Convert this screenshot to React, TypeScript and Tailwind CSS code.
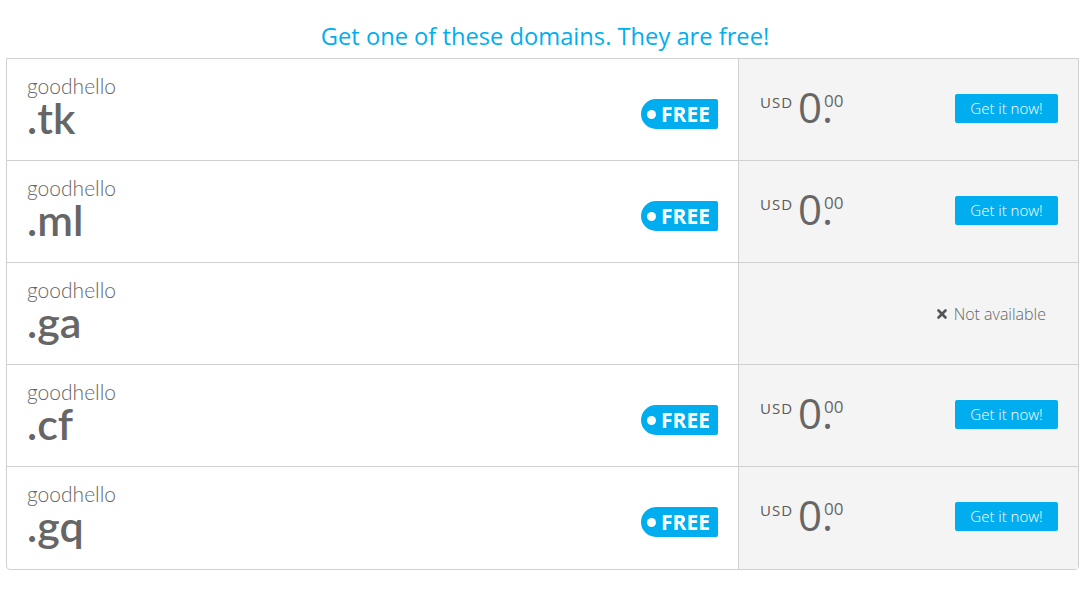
import { X } from 'lucide-react';

const rows = [
  { tld: '.tk', free: true },
  { tld: '.ml', free: true },
  { tld: '.ga', free: false },
  { tld: '.cf', free: true },
  { tld: '.gq', free: true },
];

const Row = ({ tld, free, last }: { tld: string; free: boolean; last: boolean }) => (
  <div className={`flex h-[102px] ${last ? '' : 'border-b border-[#d0d0d0]'}`}>
    {/* domain name */}
    <div className="flex w-[731px] items-start justify-between pl-[20px] pr-[20px]">
      <div className="pt-[13px] font-['Lato',sans-serif] text-[#666]">
        <div className="text-[21px] font-light leading-[28px]">goodhello</div>
        <div className="-mt-[5px] text-[43px] font-semibold leading-[46px]">{tld}</div>
      </div>
      {free && (
        <div className="mt-[40px] flex h-[30px] w-[77px] items-center rounded-l-[15px] rounded-r-[2px] bg-[#00aeef] pl-[6px] font-['Open_Sans',sans-serif] text-white">
          <span className="mr-[5px] h-[9px] w-[9px] rounded-full bg-white" />
          <span className="text-[21px] font-bold leading-none">FREE</span>
        </div>
      )}
    </div>
    {/* price */}
    <div className="flex flex-1 items-start justify-between border-l border-[#d0d0d0] bg-[#f4f4f4] pl-[21px] pr-[20px] font-['Open_Sans',sans-serif] text-[#666]">
      {free ? (
        <>
          <div className="flex items-start pt-[28px]">
            <span className="mt-[8px] text-[15px] font-medium leading-none tracking-[1px] text-[#5a5a5a]">USD</span>
            <span className="ml-[5px] text-[42px] leading-[40px]">0.</span>
            <span className="-ml-[9px] mt-[5px] text-[17px] font-medium leading-none">00</span>
          </div>
          <button className="mt-[35px] h-[29px] w-[103px] rounded-[2px] bg-[#00aeef] text-[15px] font-light text-white">
            Get it now!
          </button>
        </>
      ) : (
        <div className="ml-auto mr-[12px] mt-[39px] flex items-center text-[16px] font-light text-[#666]">
          <X size={14} strokeWidth={4.5} className="mr-[5px] text-[#555]" />
          Not available
        </div>
      )}
    </div>
  </div>
);

export default function App() {
  return (
    <div className="h-[591px] w-[1090px] bg-white">
      <h1 className="pt-[20px] pb-[6px] text-center font-['Open_Sans',sans-serif] text-[23.7px] leading-[32px] text-[#00aeef]">
        Get one of these domains. They are free!
      </h1>
      <div className="ml-[6px] w-[1073px] rounded-b-[4px] border border-[#d0d0d0]">
        {rows.map((r, i) => (
          <Row key={r.tld} tld={r.tld} free={r.free} last={i === rows.length - 1} />
        ))}
      </div>
    </div>
  );
}
